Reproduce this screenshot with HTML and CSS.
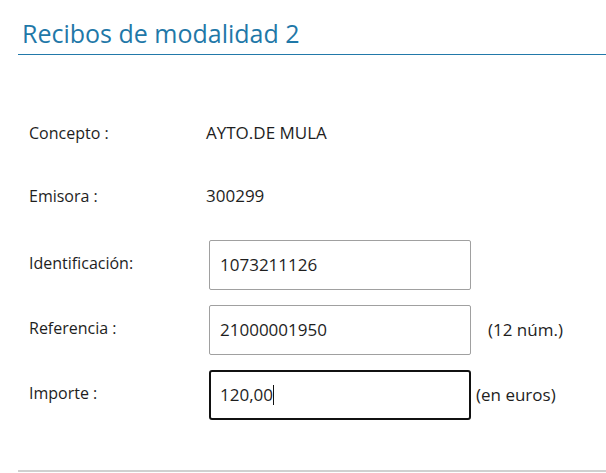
FILE: index.html
```html
<!DOCTYPE html>
<html lang="es">
<head>
<meta charset="utf-8">
<title>Recibos de modalidad 2</title>
<link rel="stylesheet" href="styles.css">
</head>
<body>
<div class="page">
  <h1 class="title">Recibos de modalidad 2</h1>
  <div class="form">
    <div class="row row-info">
      <span class="label">Concepto :</span>
      <span class="value">AYTO.DE MULA</span>
    </div>
    <div class="row row-info row-info-last">
      <span class="label">Emisora :</span>
      <span class="value">300299</span>
    </div>
    <div class="row row-field">
      <span class="label">Identificación:</span>
      <span class="input">1073211126</span>
    </div>
    <div class="row row-field">
      <span class="label">Referencia :</span>
      <span class="input">21000001950</span>
      <span class="hint hint-wide">(12 núm.)</span>
    </div>
    <div class="row row-field">
      <span class="label">Importe :</span>
      <span class="input input-focus">120,00<span class="caret"></span></span>
      <span class="hint">(en euros)</span>
    </div>
  </div>
  <div class="footer-line"></div>
</div>
</body>
</html>
```
FILE: styles.css
```css
html, body {
  margin: 0;
  padding: 0;
  background: #ffffff;
}

body {
  font-family: "Open Sans", "DejaVu Sans", sans-serif;
  color: #1e1e1e;
}

.page {
  padding-left: 18px;
}

.title {
  margin: 0;
  padding: 15px 0 0 4px;
  height: 39px;
  font-size: 25px;
  line-height: 36px;
  font-weight: 400;
  color: #1f78a8;
  border-bottom: 1px solid #2279aa;
}

.form {
  padding-top: 68px;
  padding-left: 11px;
}

.row {
  display: flex;
  align-items: flex-start;
}

.label {
  width: 177px;
  flex: none;
  font-size: 16px;
  line-height: 20px;
}

.row-info {
  height: 63px;
}

.row-info-last {
  height: 54px;
}

.row-info .value {
  font-size: 17px;
  line-height: 20px;
}

.row-field {
  height: 65px;
}

.row-field .label {
  padding-top: 13px;
}

.input {
  display: block;
  box-sizing: border-box;
  width: 262px;
  height: 50px;
  margin-left: 3px;
  padding: 0 10px;
  border: 1px solid #a0a0a0;
  border-radius: 2px;
  font-size: 17px;
  line-height: 48px;
  color: #1e1e1e;
}

.input-focus {
  border: 2px solid #111111;
  border-radius: 3px;
  line-height: 46px;
  padding-left: 9px;
}

.caret {
  display: inline-block;
  width: 1px;
  height: 20px;
  background: #111111;
  vertical-align: -4px;
}

.hint {
  font-size: 17px;
  line-height: 50px;
  margin-left: 5px;
}

.hint-wide {
  margin-left: 17px;
}

.footer-line {
  margin-top: 35px;
  border-top: 2px solid #d0d0d0;
}
```
